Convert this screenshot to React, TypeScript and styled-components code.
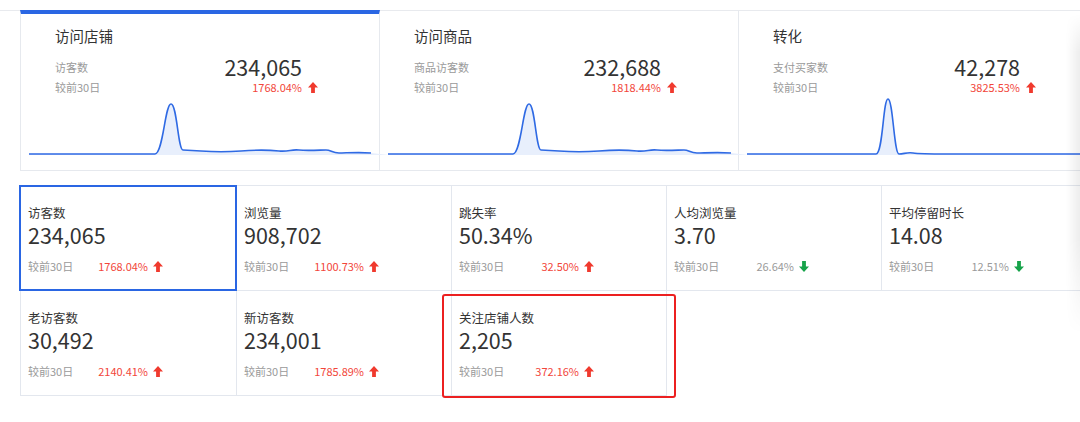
import styled, { createGlobalStyle } from "styled-components";

const GlobalStyle = createGlobalStyle`
  html, body {
    margin: 0;
    padding: 0;
    background: #fff;
    overflow: hidden;
  }
  body {
    font-family: "Noto Sans CJK SC", "Noto Sans", sans-serif;
    color: #333;
  }
`;

type Trend = "up" | "down";

const overview = [
  {
    title: "访问店铺",
    label: "访客数",
    value: "234,065",
    pct: "1768.04%",
    line: "M0,56 L126,56 C134,56 136,6 142,6 C148,6 149,52 154,52 L172,53 C185,54 199,54 212,53 S240,52 250,53 S262,51 270,52 S292,52 297,52 S303,55 310,55 S330,54 342,55",
    active: true,
  },
  {
    title: "访问商品",
    label: "商品访客数",
    value: "232,688",
    pct: "1818.44%",
    line: "M0,56 L125,56 C133,56 135,6 141,6 C147,6 148,52 153,52 L171,53 C184,54 198,54 211,53 S239,52 249,53 S261,51 269,52 S291,52 296,52 S302,55 309,55 S329,54 343,55",
    active: false,
  },
  {
    title: "转化",
    label: "支付买家数",
    value: "42,278",
    pct: "3825.53%",
    line: "M0,56 L129,56 C136,56 136,1 141,1 C146,1 147,56 152,56 C157,56 160,54 166,55 S180,56 200,56 L360,56",
    active: false,
  },
];

const metrics: { label: string; value: string; pct: string; trend: Trend; active?: boolean; marked?: boolean }[][] = [
  [
    { label: "访客数", value: "234,065", pct: "1768.04%", trend: "up", active: true },
    { label: "浏览量", value: "908,702", pct: "1100.73%", trend: "up" },
    { label: "跳失率", value: "50.34%", pct: "32.50%", trend: "up" },
    { label: "人均浏览量", value: "3.70", pct: "26.64%", trend: "down" },
    { label: "平均停留时长", value: "14.08", pct: "12.51%", trend: "down" },
  ],
  [
    { label: "老访客数", value: "30,492", pct: "2140.41%", trend: "up" },
    { label: "新访客数", value: "234,001", pct: "1785.89%", trend: "up" },
    { label: "关注店铺人数", value: "2,205", pct: "372.16%", trend: "up", marked: true },
  ],
];

const Arrow = ({ trend }: { trend: Trend }) => (
  <ArrowIcon viewBox="0 0 10 11" $trend={trend}>
    {trend === "up" ? (
      <path d="M5 0 L10 5.6 H6.9 V11 H3.1 V5.6 H0 Z" />
    ) : (
      <path d="M5 11 L10 5.4 H6.9 V0 H3.1 V5.4 H0 Z" />
    )}
  </ArrowIcon>
);

const App = () => {
  return (
    <>
      <GlobalStyle />
      <Page>
        <CardStrip>
          {overview.map((c) => (
            <Card key={c.title} $active={c.active}>
              <CardTitle>{c.title}</CardTitle>
              <StatRow>
                <StatLine>
                  <SmallLabel>{c.label}</SmallLabel>
                  <BigValue>{c.value}</BigValue>
                </StatLine>
                <span />
                <StatLine>
                  <SmallLabel>较前30日</SmallLabel>
                  <Pct $trend="up">{c.pct}</Pct>
                </StatLine>
                <ArrowCell>
                  <Arrow trend="up" />
                </ArrowCell>
              </StatRow>
              <Chart viewBox="0 0 344 60" preserveAspectRatio="none">
                <path d={`${c.line} L360,57 L0,57 Z`} fill="#e8effc" stroke="none" />
                <path d={c.line} fill="none" stroke="#2f6ae4" strokeWidth="1.6" />
              </Chart>
            </Card>
          ))}
        </CardStrip>

        <MetricGrid>
          {metrics.map((row, ri) =>
            row.map((m) => (
              <Cell key={`${ri}-${m.label}`} $active={m.active} $marked={m.marked}>
                <CellLabel>{m.label}</CellLabel>
                <CellValue>{m.value}</CellValue>
                <CompareRow>
                  <CompareText>
                    <SmallLabel>较前30日</SmallLabel>
                    <Pct $trend={m.trend}>{m.pct}</Pct>
                  </CompareText>
                  <Arrow trend={m.trend} />
                </CompareRow>
              </Cell>
            ))
          )}
        </MetricGrid>
        <EdgeShadow />
      </Page>
    </>
  );
};

export default App;

const Page = styled.div`
  position: relative;
  width: 1080px;
  height: 422px;
  padding-top: 10px;
  box-sizing: border-box;
  overflow: hidden;
`;

const CardStrip = styled.div`
  display: flex;
  padding-left: 20px;
  border-top: 1px solid #e8eaee;
  width: 1200px;
`;

const Card = styled.div<{ $active?: boolean }>`
  width: 359px;
  height: 161px;
  flex: none;
  box-sizing: border-box;
  margin-top: -1px;
  border-right: 1px solid #e6e9ee;
  border-bottom: 1px solid #e6e9ee;
  border-top: ${(p) => (p.$active ? "4px solid #2a66e3" : "1px solid #e8eaee")};
  padding: ${(p) => (p.$active ? "12px" : "15px")} 0 0 34px;
  display: flex;
  flex-direction: column;

  &:first-child {
    width: 360px;
    border-left: 1px solid #e6e9ee;
  }
`;

const CardTitle = styled.div`
  font-size: 14.5px;
  line-height: 20px;
  color: #333;
`;

const StatRow = styled.div`
  display: grid;
  grid-template-columns: 247px 16px;
  grid-template-rows: 22px 18px;
  align-items: center;
  margin-top: 10px;
`;

const StatLine = styled.div`
  display: flex;
  justify-content: space-between;
  align-items: center;
`;

const ArrowCell = styled.div`
  display: flex;
  justify-content: flex-end;
  align-items: center;
`;

const SmallLabel = styled.span`
  font-size: 11px;
  color: #9a9a9a;
  line-height: 16px;
`;

const BigValue = styled.span`
  font-size: 21.5px;
  line-height: 22px;
  color: #333;
`;

const Pct = styled.span<{ $trend: Trend }>`
  font-size: 11px;
  line-height: 16px;
  color: ${(p) => (p.$trend === "up" ? "#f2463a" : "#9a9a9a")};
`;

const ArrowIcon = styled.svg<{ $trend: Trend }>`
  width: 10px;
  height: 11px;
  fill: ${(p) => (p.$trend === "up" ? "#f03a2e" : "#17a34a")};
  flex: none;
`;

const Chart = styled.svg`
  width: 344px;
  height: 60px;
  margin-top: 2px;
  margin-left: -26px;
  overflow: visible;
`;

const MetricGrid = styled.div`
  display: grid;
  grid-template-columns: 216px 215px 215px 215px 215px;
  grid-auto-rows: 105px;
  margin: 14px 0 0 20px;
  width: 1076px;
  border-left: 1px solid #e3e7ee;
  border-top: 1px solid #e3e7ee;
`;

const Cell = styled.div<{ $active?: boolean; $marked?: boolean }>`
  position: relative;
  box-sizing: border-box;
  border-right: 1px solid #e3e7ee;
  border-bottom: 1px solid #e3e7ee;
  padding: 19px 0 0 7px;

  ${(p) =>
    p.$active &&
    `
    &::after {
      content: "";
      position: absolute;
      top: -1px;
      left: -2px;
      right: -1px;
      bottom: -1px;
      border: 2px solid #2a66e3;
    }
  `}

  ${(p) =>
    p.$marked &&
    `
    &::before {
      content: "";
      position: absolute;
      top: 3px;
      left: -10px;
      right: -10px;
      bottom: -3px;
      border: 2px solid #ec2020;
      border-radius: 3px;
      z-index: 2;
    }
  `}
`;

const CellLabel = styled.div`
  font-size: 12.5px;
  line-height: 16px;
  color: #333;
`;

const CellValue = styled.div`
  font-size: 21.5px;
  line-height: 28px;
  color: #333;
`;

const CompareRow = styled.div`
  display: flex;
  align-items: center;
  gap: 5px;
  margin-top: 9px;
`;

const CompareText = styled.div`
  width: 120px;
  display: flex;
  justify-content: space-between;
  align-items: center;
`;

const EdgeShadow = styled.div`
  position: absolute;
  right: 0;
  top: 14px;
  width: 14px;
  height: 320px;
  background: linear-gradient(to right, rgba(0, 0, 0, 0), rgba(0, 0, 0, 0.07));
  -webkit-mask-image: linear-gradient(to bottom, transparent, #000 12%, #000 70%, transparent);
  mask-image: linear-gradient(to bottom, transparent, #000 12%, #000 70%, transparent);
  pointer-events: none;
`;
